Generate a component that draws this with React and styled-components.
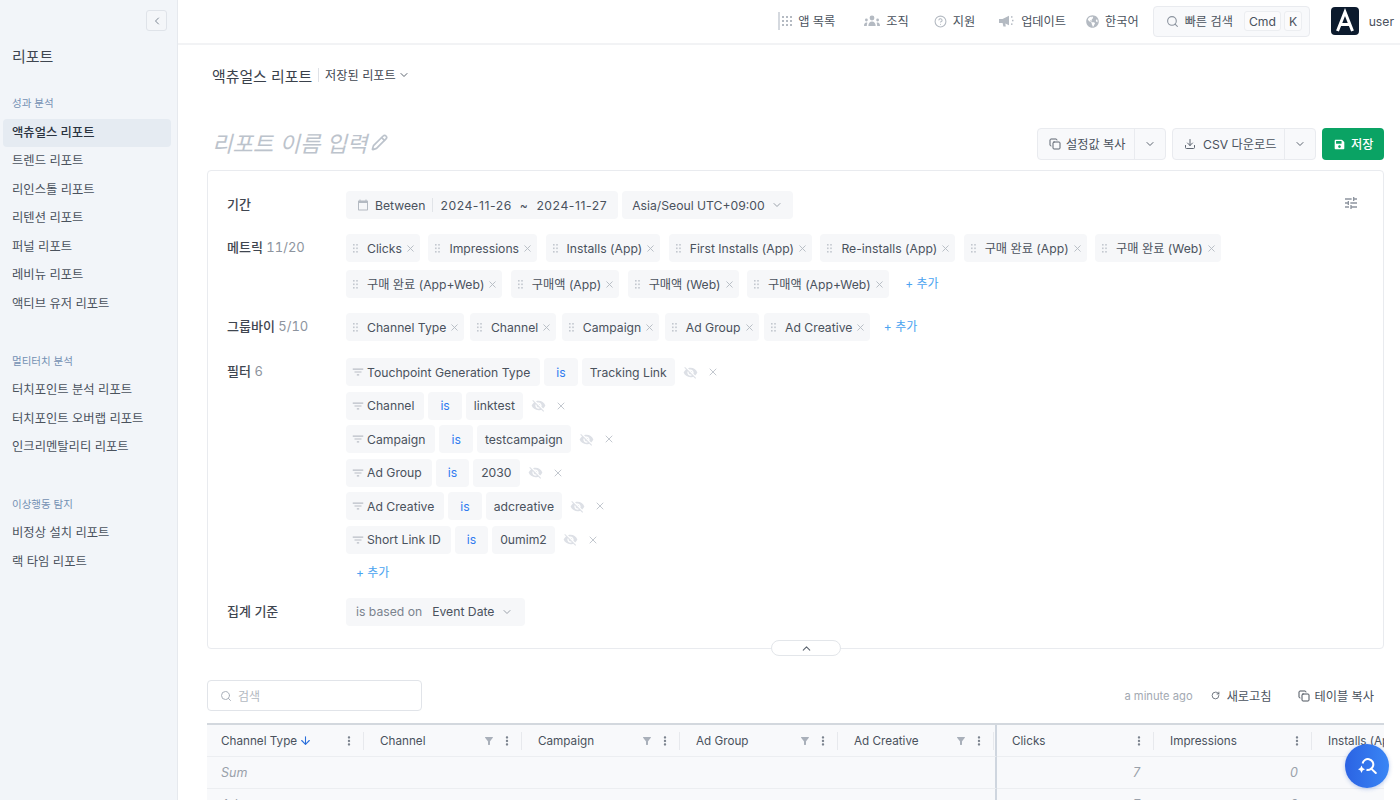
import React from "react";
import styled, { createGlobalStyle } from "styled-components";
import { ChevronLeft, ChevronDown, ChevronUp, Search, Copy, RotateCw, ArrowDown, X, CircleHelp, Download, Pencil } from "lucide-react";
import { FaGlobeAmericas, FaSave } from "react-icons/fa";
import { MdTune, MdFilterList, MdMoreVert, MdFilterAlt, MdCalendarToday, MdVisibilityOff } from "react-icons/md";

const GlobalStyle = createGlobalStyle`
  html, body {
    margin: 0;
    padding: 0;
    height: 800px;
    overflow: hidden;
    background: #fff;
    font-family: Inter, "Noto Sans CJK KR", sans-serif;
    color: #3f4650;
  }
  * { box-sizing: border-box; }
`;

const navGroups = [
  { title: "성과 분석", items: ["액츄얼스 리포트", "트렌드 리포트", "리인스톨 리포트", "리텐션 리포트", "퍼널 리포트", "레비뉴 리포트", "액티브 유저 리포트"] },
  { title: "멀티터치 분석", items: ["터치포인트 분석 리포트", "터치포인트 오버랩 리포트", "인크리멘탈리티 리포트"] },
  { title: "이상행동 탐지", items: ["비정상 설치 리포트", "랙 타임 리포트"] },
];

const metricRows = [
  ["Clicks", "Impressions", "Installs (App)", "First Installs (App)", "Re-installs (App)", "구매 완료 (App)", "구매 완료 (Web)"],
  ["구매 완료 (App+Web)", "구매액 (App)", "구매액 (Web)", "구매액 (App+Web)"],
];

const groupBys = ["Channel Type", "Channel", "Campaign", "Ad Group", "Ad Creative"];

const filters = [
  ["Touchpoint Generation Type", "Tracking Link"],
  ["Channel", "linktest"],
  ["Campaign", "testcampaign"],
  ["Ad Group", "2030"],
  ["Ad Creative", "adcreative"],
  ["Short Link ID", "0umim2"],
];

const columns = [
  { name: "Channel Type", sorted: true },
  { name: "Channel", filter: true },
  { name: "Campaign", filter: true },
  { name: "Ad Group", filter: true },
  { name: "Ad Creative", filter: true, frozen: true },
  { name: "Clicks", value: "7" },
  { name: "Impressions", value: "0" },
  { name: "Installs (App)" },
];

const Page = styled.div`
  display: flex;
  width: 1400px;
  height: 800px;
  overflow: hidden;
  position: relative;
`;

const Sidebar = styled.aside`
  flex: 0 0 178px;
  height: 800px;
  background: #f2f5f9;
  border-right: 1px solid #e6e9ee;
  padding: 10px 6px 0 3px;
`;

const CollapseButton = styled.button`
  display: flex;
  align-items: center;
  justify-content: center;
  width: 21px;
  height: 21px;
  margin-left: auto;
  margin-right: 4px;
  padding: 0;
  background: #f4f6f9;
  border: 1px solid #dfe3e9;
  border-radius: 3px;
  color: #7d8794;
`;

const SidebarTitle = styled.div`
  font-size: 15px;
  line-height: 20px;
  margin: 16px 0 29px 9px;
  color: #3f4650;
`;

const NavSection = styled.div`
  margin-bottom: 35.5px;
`;

const NavTitle = styled.div`
  font-size: 10.5px;
  line-height: 16px;
  margin: 0 0 6.5px 9px;
  color: #7390b3;
`;

const NavItem = styled.div`
  height: 28px;
  margin-bottom: 0.6px;
  padding-left: 9px;
  font-size: 12.3px;
  line-height: 27px;
  border-radius: 4px;
  color: ${(p) => (p.$active ? "#2a3340" : "#4a525d")};
  background: ${(p) => (p.$active ? "#e5ebf2" : "transparent")};
  font-weight: ${(p) => (p.$active ? 500 : 400)};
`;

const Main = styled.main`
  flex: 1;
  min-width: 0;
`;

const TopBar = styled.header`
  display: flex;
  align-items: center;
  justify-content: flex-end;
  height: 45px;
  padding: 0 6px 1px 0;
  border-bottom: 2px solid #f2f3f5;
`;

const TopItem = styled.div`
  display: flex;
  align-items: center;
  gap: 6px;
  margin-right: ${(p) => p.$gap}px;
  font-size: 12.2px;
  white-space: nowrap;
  color: #4a525d;
  svg { color: #b4bac2; }
`;

const AppsDivider = styled.span`
  width: 2px;
  height: 18px;
  margin-right: 2px;
  background: #d5d9df;
`;

const QuickSearch = styled.div`
  display: flex;
  align-items: center;
  width: 157px;
  height: 31px;
  padding: 0 6px 0 12px;
  margin-right: 21px;
  background: #f8f9fb;
  border: 1px solid #e9ebef;
  border-radius: 4px;
  font-size: 12.2px;
  white-space: nowrap;
  color: #4a525d;
  svg { color: #8b939e; margin-right: 6px; }
`;

const Key = styled.span`
  display: flex;
  align-items: center;
  justify-content: center;
  height: 20px;
  padding: 0 4px;
  margin-left: ${(p) => p.$gap}px;
  background: #fbfbfc;
  border: 1px solid #eceef1;
  border-radius: 3px;
  font-size: 12.2px;
`;

const UserName = styled.span`
  font-size: 12.2px;
  margin-left: 10px;
  color: #4a525d;
`;

const Content = styled.div`
  padding: 0 16px 0 29px;
`;

const Breadcrumb = styled.div`
  display: flex;
  align-items: center;
  height: 60px;
  padding: 0 0 0 5px;
  margin-bottom: 23px;
  svg { color: #5d6570; margin-left: 2px; }
`;

const CrumbTitle = styled.span`
  font-size: 14.9px;
  color: #3a414b;
  padding-right: 6px;
  border-right: 1px solid #dfe2e7;
  display: inline-flex;
  align-items: center;
  height: 14px;
`;

const CrumbLink = styled.span`
  font-size: 12.2px;
  color: #3f4650;
  margin-left: 6px;
`;

const TitleRow = styled.div`
  display: flex;
  align-items: center;
  justify-content: space-between;
  height: 32px;
  margin-bottom: 10px;
  padding-left: 5px;
`;

const ReportName = styled.div`
  display: flex;
  align-items: center;
  gap: 4px;
  padding-bottom: 4px;
  font-size: 22.2px;
  font-style: italic;
  color: #bcc3cc;
`;

const Actions = styled.div`
  display: flex;
  gap: 6px;
`;

const SplitButton = styled.div`
  display: flex;
  height: 32px;
  background: #f8f9fb;
  border: 1px solid #e9ebef;
  border-radius: 4px;
  font-size: 12.2px;
  color: #4a525d;
`;

const SplitMain = styled.div`
  display: flex;
  align-items: center;
  gap: ${(p) => p.$inner}px;
  width: ${(p) => p.$width}px;
  padding-left: 11px;
  svg { color: #5d6570; }
`;

const SplitCaret = styled.div`
  display: flex;
  align-items: center;
  justify-content: center;
  width: 31px;
  border-left: 1px solid #e9ebef;
  svg { color: #5d6570; }
`;

const SaveButton = styled.button`
  display: flex;
  align-items: center;
  gap: 6px;
  height: 32px;
  width: 62px;
  padding: 0 0 0 12px;
  border: 0;
  border-radius: 4px;
  background: #0aa364;
  color: #fff;
  font: inherit;
  font-size: 12.2px;
  font-weight: 500;
`;

const Card = styled.section`
  position: relative;
  height: 479px;
  padding: 20px 19px 0;
  border: 1px solid #e9ebef;
  border-radius: 4px;
  margin-bottom: 31px;
`;

const Row = styled.div`
  display: grid;
  grid-template-columns: 119px 1fr;
  margin-bottom: ${(p) => p.$gap}px;
`;

const Label = styled.div`
  font-size: 13px;
  line-height: 27px;
  color: #3f4650;
  font-weight: 500;
  span {
    font-weight: 400;
    font-variant-numeric: tabular-nums;
    color: #8d949e;
  }
`;

const Lines = styled.div`
  display: flex;
  flex-direction: column;
  gap: ${(p) => p.$gap}px;
`;

const Line = styled.div`
  display: flex;
  align-items: center;
  gap: ${(p) => p.$gap}px;
`;

const Chip = styled.div`
  display: flex;
  align-items: center;
  height: 28px;
  padding: ${(p) => p.$padding || "0 4px 0 7px"};
  background: #f6f7f9;
  border-radius: 4px;
  font-size: 12.2px;
  white-space: nowrap;
  color: ${(p) => p.$color || "#4a525d"};
`;

const DateRange = styled.span`
  letter-spacing: 0.55px;
`;

const DragDots = styled.svg`
  flex: none;
  margin-right: 9px;
`;

const Muted = styled.span`
  color: #7b838e;
  margin-right: 10px;
`;

const PeriodDivider = styled.span`
  width: 1px;
  height: 14px;
  margin: 0 7px;
  background: #e1e4e8;
`;

const AddLink = styled.span`
  font-size: 12px;
  color: #4aa3f0;
  margin-left: ${(p) => p.$left}px;
  line-height: 26px;
`;

const TuneIcon = styled(MdTune)`
  position: absolute;
  right: 24px;
  top: 24px;
  color: #8d949e;
`;

const FoldTab = styled.div`
  position: absolute;
  left: 563px;
  bottom: -8px;
  display: flex;
  align-items: center;
  justify-content: center;
  width: 70px;
  height: 16px;
  background: #fff;
  border: 1px solid #e3e6ea;
  border-radius: 8px;
  color: #5d6570;
`;

const TableBar = styled.div`
  display: flex;
  align-items: center;
  height: 31px;
  margin-bottom: 12px;
`;

const SearchField = styled.div`
  display: flex;
  align-items: center;
  gap: 6px;
  width: 215px;
  height: 31px;
  padding-left: 12px;
  border: 1px solid #e1e4e9;
  border-radius: 4px;
  font-size: 12px;
  color: #b3b9c1;
`;

const Updated = styled.span`
  margin-left: auto;
  margin-right: 18px;
  font-size: 11.2px;
  color: #a3a9b2;
`;

const TableAction = styled.div`
  display: flex;
  align-items: center;
  gap: ${(p) => p.$inner}px;
  margin-right: ${(p) => p.$gap}px;
  font-size: 12.2px;
  color: #4a525d;
`;

const Table = styled.div`
  display: grid;
  grid-template-columns: repeat(8, 158px);
  width: 1177px;
  overflow: hidden;
  border-top: 2px solid #d3d8de;
  background: #f8f9fb;
`;

const HeadCell = styled.div`
  display: flex;
  align-items: center;
  height: 32px;
  padding-left: 15px;
  border-bottom: 1px solid #eceef1;
  border-right: ${(p) => (p.$frozen ? "2px solid #cfd6df" : "none")};
  font-size: 11.7px;
  color: #4a525d;
  white-space: nowrap;
  &:first-child { padding-left: 14px; }
`;

const HeadIcons = styled.div`
  display: flex;
  align-items: center;
  gap: 2px;
  margin-left: auto;
  margin-right: 1px;
  padding-right: 7px;
  height: 18px;
  border-right: 1px solid #e7e9ed;
  color: #a9b0ba;
`;

const SortArrow = styled(ArrowDown)`
  color: #2a6fdb;
  margin-left: 2px;
`;

const BodyCell = styled.div`
  height: 32px;
  padding: 0 15px 0 14px;
  border-bottom: 1px solid #eceef1;
  border-right: ${(p) => (p.$frozen ? "2px solid #cfd6df" : "none")};
  font-size: 12.5px;
  line-height: 32px;
  font-style: italic;
  text-align: ${(p) => (p.$right ? "right" : "left")};
  color: #9aa1aa;
`;

const Fab = styled.button`
  position: absolute;
  right: 11px;
  bottom: 12px;
  display: flex;
  align-items: center;
  justify-content: center;
  width: 44px;
  height: 44px;
  padding: 0;
  border: 0;
  border-radius: 50%;
  background: linear-gradient(90deg, #2b63e3, #3a86f5);
  box-shadow: 0 1px 4px rgba(40, 90, 200, 0.3);
`;

function AppsIcon() {
  const dots = [];
  for (let r = 0; r < 3; r++) {
    for (let c = 0; c < 3; c++) dots.push(<rect key={`${r}-${c}`} x={c * 4} y={r * 4} width="2" height="2" />);
  }
  return <svg width="10" height="10" viewBox="0 0 10 10" fill="currentColor">{dots}</svg>;
}

function TeamIcon() {
  return (
    <svg width="16" height="12" viewBox="0 0 16 12" fill="currentColor">
      <circle cx="8" cy="3" r="2.4" />
      <path d="M4.4 11c0-3 1.4-4.6 3.6-4.6s3.6 1.6 3.6 4.6z" />
      <circle cx="2.4" cy="5" r="1.4" />
      <path d="M0 11c0-2 .9-3.4 2.4-3.4.4 0 .7.1 1 .2C3 8.500 2.800 9.700 2.800 11z" />
      <circle cx="13.600" cy="5" r="1.4" />
      <path d="M16 11c0-2-.9-3.400-2.400-3.400-.4 0-.7.1-1 .2.400.7.600 1.900.600 3.200z" />
    </svg>
  );
}

function HornIcon() {
  return (
    <svg width="16" height="12" viewBox="0 0 16 12" fill="currentColor">
      <path d="M0 4h3.500L10 .8v9.400L6.300 8.400 6.800 11.500H4.400L3.600 8H0z" />
      <rect x="12" y="1.200" width="1.500" height="1.500" />
      <rect x="13" y="4.800" width="1.500" height="1.500" />
      <rect x="12" y="8.400" width="1.500" height="1.500" />
    </svg>
  );
}

function Drag() {
  return (
    <DragDots width="5" height="9" viewBox="0 0 5 9" fill="#c3c8cf">
      {[0, 3.5, 7].map((y) => (
        <g key={y}>
          <rect x="0" y={y} width="1.6" height="1.6" />
          <rect x="3.2" y={y} width="1.6" height="1.6" />
        </g>
      ))}
    </DragDots>
  );
}

function Logo() {
  return (
    <svg width="28" height="28" viewBox="0 0 28 28">
      <rect width="28" height="28" rx="4" fill="#0c1b2e" />
      <path d="M6.500 24 14 5l7.500 19M9 17.500h10" fill="none" stroke="#fff" strokeWidth="3" />
    </svg>
  );
}

function FabIcon() {
  return (
    <svg width="20" height="20" viewBox="0 0 20 20" fill="none" stroke="#fff" strokeWidth="2">
      <path d="M5.600 7.500A5.400 5.400 0 1 1 9.500 13.700" />
      <path d="m14.200 12.600 4.600 4.400" strokeLinecap="round" />
      <path d="M4.500 9.500 5.700 12 8 13.200 5.700 14.400 4.500 17 3.300 14.400 1 13.200 3.300 12z" fill="#fff" stroke="none" />
    </svg>
  );
}

function TagChip({ text }) {
  return (
    <Chip>
      <Drag />
      {text}
      <X size={11} color="#b4bac2" style={{ marginLeft: 3 }} />
    </Chip>
  );
}

export default function App() {
  return (
    <Page>
      <GlobalStyle />
      <Sidebar>
        <CollapseButton><ChevronLeft size={12} /></CollapseButton>
        <SidebarTitle>리포트</SidebarTitle>
        {navGroups.map((group) => (
          <NavSection key={group.title}>
            <NavTitle>{group.title}</NavTitle>
            {group.items.map((item) => (
              <NavItem key={item} $active={item === "액츄얼스 리포트"}>{item}</NavItem>
            ))}
          </NavSection>
        ))}
      </Sidebar>
      <Main>
        <TopBar>
          <AppsDivider />
          <TopItem $gap={29}><AppsIcon />앱 목록</TopItem>
          <TopItem $gap={25}><TeamIcon />조직</TopItem>
          <TopItem $gap={24}><CircleHelp size={13} />지원</TopItem>
          <TopItem $gap={20}><HornIcon />업데이트</TopItem>
          <TopItem $gap={14}><FaGlobeAmericas size={13} />한국어</TopItem>
          <QuickSearch>
            <Search size={13} />빠른 검색
            <Key $gap={11}>Cmd</Key>
            <Key $gap={3}>K</Key>
          </QuickSearch>
          <Logo />
          <UserName>user</UserName>
        </TopBar>
        <Content>
          <Breadcrumb>
            <CrumbTitle>액츄얼스 리포트</CrumbTitle>
            <CrumbLink>저장된 리포트</CrumbLink>
            <ChevronDown size={12} />
          </Breadcrumb>
          <TitleRow>
            <ReportName>리포트 이름 입력<Pencil size={17} strokeWidth={2.4} /></ReportName>
            <Actions>
              <SplitButton>
                <SplitMain $width={96} $inner={5}><Copy size={12} />설정값 복사</SplitMain>
                <SplitCaret><ChevronDown size={12} /></SplitCaret>
              </SplitButton>
              <SplitButton>
                <SplitMain $width={111} $inner={7}><Download size={12} />CSV 다운로드</SplitMain>
                <SplitCaret><ChevronDown size={12} /></SplitCaret>
              </SplitButton>
              <SaveButton><FaSave size={11} />저장</SaveButton>
            </Actions>
          </TitleRow>
          <Card>
            <TuneIcon size={16} />
            <Row $gap={15}>
              <Label>기간</Label>
              <Line $gap={4}>
                <Chip $padding="0 11px">
                  <MdCalendarToday size={12} color="#b4bac2" style={{ marginRight: 6 }} />
                  Between<PeriodDivider />
                  <DateRange>2024-11-26&nbsp;&nbsp;~&nbsp;&nbsp;2024-11-27</DateRange>
                </Chip>
                <Chip $padding="0 10px">
                  Asia/Seoul UTC+09:00
                  <ChevronDown size={12} color="#9aa1aa" style={{ marginLeft: 6 }} />
                </Chip>
              </Line>
            </Row>
            <Row $gap={15}>
              <Label>메트릭 <span>11/20</span></Label>
              <Lines $gap={8}>
                {metricRows.map((row, i) => (
                  <Line key={i} $gap={8.5}>
                    {row.map((m) => <TagChip key={m} text={m} />)}
                    {i === 1 && <AddLink $left={8}>+ 추가</AddLink>}
                  </Line>
                ))}
              </Lines>
            </Row>
            <Row $gap={17}>
              <Label>그룹바이 <span>5/10</span></Label>
              <Line $gap={5.5}>
                {groupBys.map((g) => <TagChip key={g} text={g} />)}
                <AddLink $left={8}>+ 추가</AddLink>
              </Line>
            </Row>
            <Row $gap={12}>
              <Label>필터 <span>6</span></Label>
              <Lines $gap={5.6}>
                {filters.map(([field, value]) => (
                  <Line key={field} $gap={4}>
                    <Chip $padding="0 10px 0 5px">
                      <MdFilterList size={14} color="#b9bec6" style={{ marginRight: 2 }} />
                      {field}
                    </Chip>
                    <Chip $padding="0 12px" $color="#2f7bf0">is</Chip>
                    <Chip $padding="0 8px">{value}</Chip>
                    <MdVisibilityOff size={15} color="#dde0e6" style={{ marginLeft: 4 }} />
                    <X size={12} color="#c3c8cf" style={{ marginLeft: 5 }} />
                  </Line>
                ))}
                <AddLink $left={10}>+ 추가</AddLink>
              </Lines>
            </Row>
            <Row $gap={0}>
              <Label>집계 기준</Label>
              <Line $gap={0}>
                <Chip $padding="0 12px 0 10px">
                  <Muted>is based on</Muted>Event Date
                  <ChevronDown size={12} color="#9aa1aa" style={{ marginLeft: 7 }} />
                </Chip>
              </Line>
            </Row>
            <FoldTab><ChevronUp size={13} /></FoldTab>
          </Card>
          <TableBar>
            <SearchField><Search size={12} color="#a9b0ba" />검색</SearchField>
            <Updated>a minute ago</Updated>
            <TableAction $gap={26} $inner={7}><RotateCw size={9} />새로고침</TableAction>
            <TableAction $gap={10} $inner={5}><Copy size={12} />테이블 복사</TableAction>
          </TableBar>
          <Table>
            {columns.map((col) => (
              <HeadCell key={col.name} $frozen={col.frozen}>
                {col.name}
                {col.sorted && <SortArrow size={13} />}
                <HeadIcons>
                  {col.filter && <MdFilterAlt size={12} />}
                  {col.filter && <span style={{ width: 1 }} />}
                  <MdMoreVert size={14} color="#7b838e" />
                </HeadIcons>
              </HeadCell>
            ))}
            {columns.map((col, i) => (
              <BodyCell key={col.name} $frozen={col.frozen} $right={!!col.value}>
                {i === 0 ? "Sum" : col.value}
              </BodyCell>
            ))}
            {columns.map((col, i) => (
              <BodyCell key={col.name} $frozen={col.frozen} $right={!!col.value}>
                {i === 0 ? "Ad" : col.value}
              </BodyCell>
            ))}
          </Table>
        </Content>
      </Main>
      <Fab><FabIcon /></Fab>
    </Page>
  );
}
